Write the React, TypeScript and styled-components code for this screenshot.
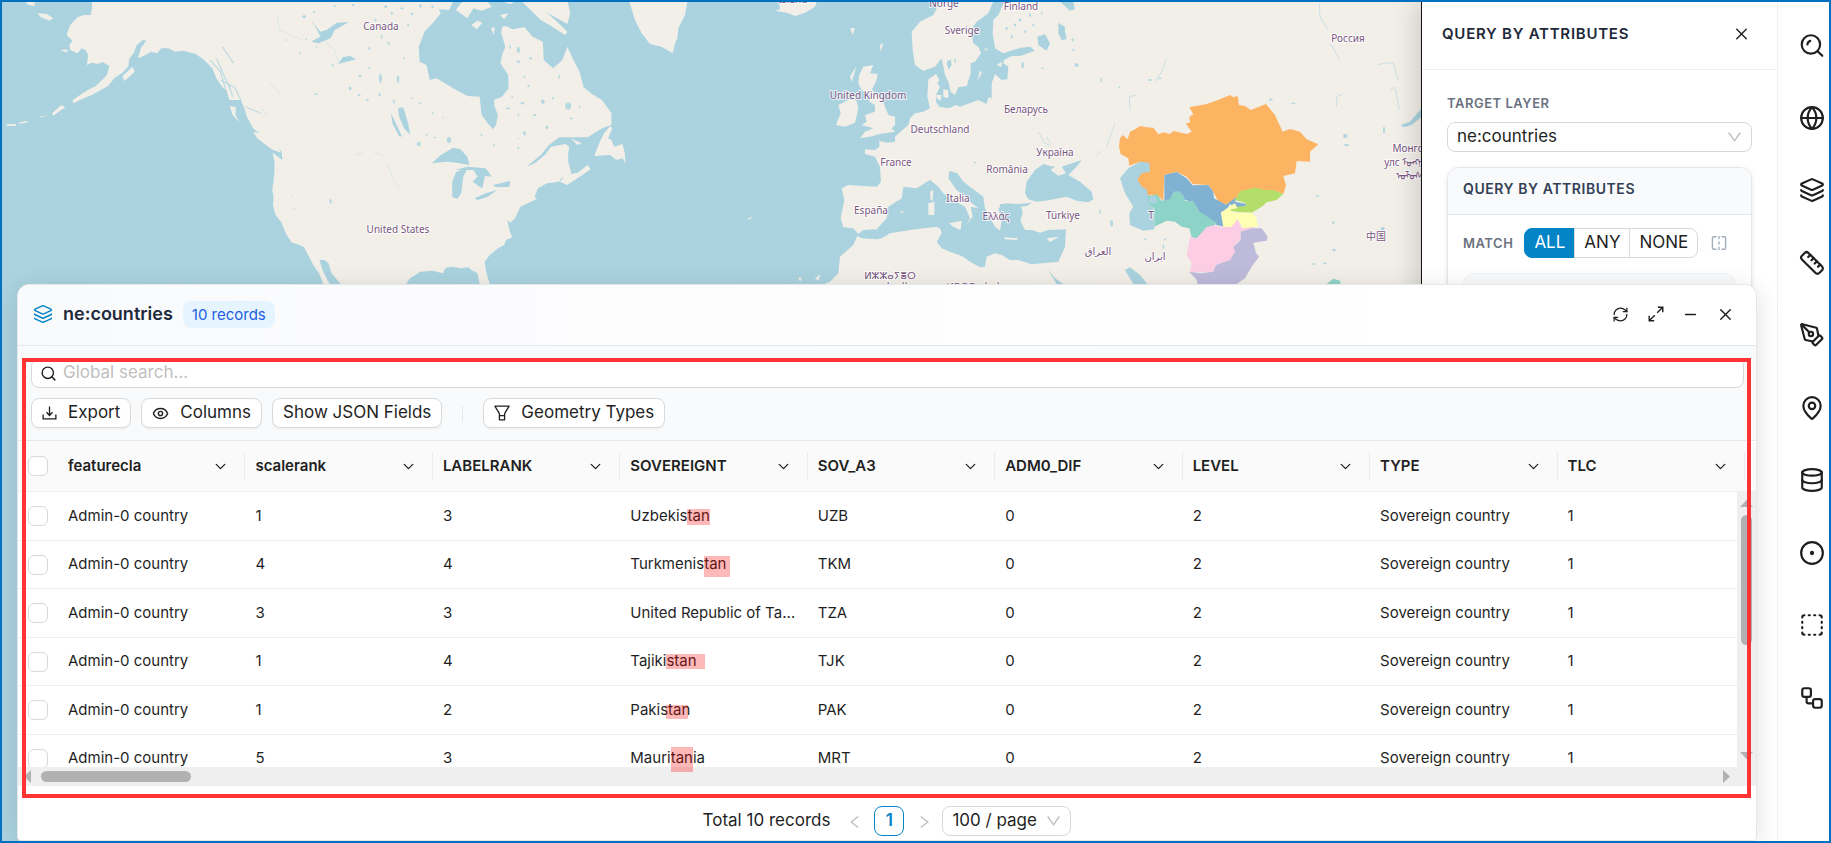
import React from "react";
import styled, { createGlobalStyle, css } from "styled-components";
import {
  Layers, Globe, Ruler, PenTool, MapPin, Database, SquareDashed,
  X, Minus, RefreshCw, Search, ChevronDown, Eye,
} from "lucide-react";

const GlobalStyle = createGlobalStyle`
  *, *::before, *::after { box-sizing: border-box; }
  html, body { margin: 0; padding: 0; }
  body { font-family: Inter, "Liberation Sans", sans-serif; color: #1f1f1f; background: #fff; }
  button, input, select { font: inherit; color: inherit; margin: 0; }
  button { cursor: pointer; }
`;

const color = {
  frame: "#0070c0",
  accent: "#0284c7",
  line: "#e5e7eb",
  control: "#d9d9d9",
  tint: "#f8fafc",
  slate: "#1e293b",
  muted: "#6b7280",
};

/* ---------- page shell ---------- */

const Page = styled.div`
  position: relative;
  display: grid;
  grid-template-columns: minmax(0, 1fr) 356px 52px;
  height: 100vh;
  border: 2px solid ${color.frame};
  overflow: hidden;
`;

const MapPane = styled.main`
  min-width: 0;
  overflow: hidden;
  background: #aad3df;
`;

const MapDrawing = styled.svg`
  display: block;
  width: 100%;
  height: 100%;
`;

const MapLabel = styled.text`
  font-family: "Noto Sans", "DejaVu Sans", "Noto Sans CJK SC", sans-serif;
  font-size: 10px;
  fill: #7a5682;
  stroke: rgba(255, 255, 255, 0.75);
  stroke-width: 2px;
  paint-order: stroke;
  text-anchor: middle;
`;

/* ---------- query panel ---------- */

const Panel = styled.aside`
  z-index: 1;
  background: #fff;
  border-left: 1px solid #111;
  box-shadow: -4px 0 24px rgba(0, 0, 0, 0.16);
`;

const PanelHeader = styled.header`
  display: flex;
  align-items: center;
  justify-content: space-between;
  height: 68px;
  padding: 0 26px 4px 20px;
  border-bottom: 1px solid #f0f0f0;
`;

const PanelTitle = styled.h2`
  margin: 0;
  font-size: 15px;
  line-height: 20px;
  font-weight: 600;
  letter-spacing: 0.05em;
  color: ${color.slate};
`;

const IconButton = styled.button`
  display: flex;
  align-items: center;
  justify-content: center;
  width: 19px;
  height: 19px;
  padding: 0;
  border: 0;
  background: none;
`;

const PanelBody = styled.div`
  display: flex;
  flex-direction: column;
  padding: 24px 25px 0 25px;
`;

const FieldLabel = styled.label`
  font-size: 13px;
  line-height: 18px;
  font-weight: 600;
  letter-spacing: 0.04em;
  color: ${color.muted};
`;

const SelectBox = styled.div<{ $top?: number }>`
  position: relative;
  display: flex;
  align-items: center;
  height: 30px;
  margin-top: ${(p) => p.$top ?? 0}px;
  border: 1px solid ${color.control};
  border-radius: 8px;
  background: #fff;
  svg { position: absolute; right: 10px; pointer-events: none; }
`;

const Select = styled.select`
  appearance: none;
  width: 100%;
  height: 28px;
  padding: 0 9px 2px;
  border: 0;
  border-radius: 8px;
  background: transparent;
  font-size: 17px;
`;

const Card = styled.section`
  margin-top: 15px;
  border: 1px solid ${color.line};
  border-radius: 12px;
  box-shadow: 0 1px 4px rgba(0, 0, 0, 0.1);
  overflow: hidden;
`;

const CardTitle = styled.h3`
  margin: 0;
  padding: 11px 15px 15px;
  border-bottom: 1px solid ${color.line};
  background: ${color.tint};
  font-size: 14px;
  line-height: 20px;
  font-weight: 600;
  letter-spacing: 0.04em;
  color: #334155;
`;

const CardBody = styled.div`
  padding: 13px 15px 0;
`;

const MatchRow = styled.div`
  display: flex;
  align-items: center;
  gap: 11px;
`;

const Segments = styled.div`
  display: flex;
  height: 30px;
`;

const Segment = styled.button<{ $active?: boolean }>`
  padding: 0 9px 2px;
  border: 1px solid ${color.control};
  background: #fff;
  font-size: 17px;
  line-height: 24px;
  & + & { margin-left: -1px; }
  &:first-child { border-radius: 8px 0 0 8px; }
  &:last-child { border-radius: 0 8px 8px 0; }
  ${(p) => p.$active && css`
    background: ${color.accent};
    border-color: ${color.accent};
    color: #fff;
  `}
`;

const RuleGroup = styled.div`
  height: 200px;
  margin-top: 15px;
  border: 1px solid #eef0f3;
  border-radius: 12px;
  background: ${color.tint};
`;

/* ---------- tool rail ---------- */

const RailShell = styled.div`
  z-index: 1;
  border-left: 1px solid #f0f0f0;
  background: #fff;
`;

const Rail = styled.nav`
  display: flex;
  flex-direction: column;
  align-items: flex-end;
  height: 732px;
  padding-top: 7px;
`;

const RailButton = styled.button`
  display: flex;
  flex: 1;
  align-items: center;
  justify-content: center;
  width: 34px;
  padding: 0;
  border: 0;
  background: none;
`;

/* ---------- attribute window ---------- */

const Dialog = styled.section`
  position: absolute;
  z-index: 2;
  left: 15px;
  right: 72px;
  bottom: 0;
  border: 1px solid ${color.line};
  border-radius: 12px 12px 4px 4px;
  background: #fff;
  box-shadow: 0 4px 24px rgba(0, 0, 0, 0.12);
`;

const DialogHeader = styled.header`
  display: flex;
  align-items: center;
  gap: 10px;
  height: 61px;
  padding: 0 21px 2px 15px;
  border-bottom: 1px solid ${color.line};
  border-radius: 12px 12px 0 0;
  background: linear-gradient(90deg, #f9fafc, #fff 80%);
  color: #1f1f1f;
`;

const DialogTitle = styled.h2`
  margin: 0;
  font-size: 18px;
  line-height: 24px;
  font-weight: 600;
  color: ${color.slate};
`;

const Badge = styled.span`
  padding: 0 9px;
  border-radius: 8px;
  background: #e6f4ff;
  font-size: 15px;
  line-height: 27px;
  color: #1d5fe0;
`;

const WindowButtons = styled.div`
  display: flex;
  gap: 16px;
  margin-left: auto;
`;

const Tools = styled.div`
  display: flex;
  flex-direction: column;
  gap: 10px;
  padding: 12px 12px 12px 13px;
  border-bottom: 1px solid ${color.line};
  background: ${color.tint};
`;

const SearchBox = styled.label`
  display: flex;
  align-items: center;
  gap: 6px;
  height: 30px;
  padding: 0 8px;
  border: 1px solid ${color.control};
  border-radius: 8px;
  background: #fff;
`;

const SearchInput = styled.input`
  flex: 1;
  height: 24px;
  padding: 0 0 2px;
  border: 0;
  outline: 0;
  background: none;
  font-size: 17px;
  &::placeholder { color: #bfbfbf; opacity: 1; }
`;

const ToolRow = styled.div`
  display: flex;
  align-items: center;
  gap: 10px;
`;

const ToolButton = styled.button`
  display: flex;
  align-items: center;
  gap: 11px;
  height: 30px;
  padding: 0 10px;
  border: 1px solid ${color.control};
  border-radius: 8px;
  background: #fff;
  box-shadow: 0 2px 1px rgba(0, 0, 0, 0.03);
  font-size: 17px;
  line-height: 24px;
  span { padding-bottom: 2px; }
`;

const Separator = styled.span`
  width: 1px;
  height: 15px;
  margin: 0 10px;
  background: ${color.line};
`;

const Grid = styled.table`
  width: 100%;
  border-collapse: separate;
  border-spacing: 0;
  table-layout: fixed;
  font-size: 15px;
`;

const CheckCol = styled.col`
  width: 40px;
`;

const EdgeCol = styled.col`
  width: 11px;
`;

const HeadCell = styled.th`
  height: 51px;
  padding: 0;
  border-bottom: 1px solid #eee;
  background: #fafafa;
  font-weight: 600;
  text-align: left;
  &:last-child { border-radius: 0 8px 0 0; }
`;

const HeadLabel = styled.div`
  display: flex;
  align-items: center;
  justify-content: space-between;
  height: 28px;
  padding: 0 15px 0 10px;
  border-right: 1px solid #ebebeb;
  span { padding-bottom: 2px; }
`;

const CheckHolder = styled.div`
  padding-left: 10px;
  line-height: 0;
`;

const Row = styled.tr`
  height: 49px;
  &:nth-child(even) { height: 48px; }
`;

const Cell = styled.td`
  padding: 0 10px 2px;
  border-bottom: 1px solid #eee;
  white-space: nowrap;
`;

const CheckCell = styled.td`
  padding: 0;
  border-bottom: 1px solid #eee;
`;

const Ellipsis = styled.div`
  overflow: hidden;
  text-overflow: ellipsis;
`;

const Check = styled.input`
  appearance: none;
  width: 20px;
  height: 20px;
  margin: 0;
  border: 1px solid ${color.control};
  border-radius: 6px;
  background: #fff;
  vertical-align: middle;
`;

/* translucent marker laid over the matching letters */
const Marker = styled.mark<{ $inset: string }>`
  position: relative;
  background: none;
  color: inherit;
  &::after {
    content: "";
    position: absolute;
    z-index: 2;
    inset: ${(p) => p.$inset};
    background: rgba(255, 0, 0, 0.28);
  }
`;

const GridArea = styled.div`
  position: relative;
  height: 326px;
`;

const bar = css`
  position: absolute;
  z-index: 1;
  display: flex;
  align-items: center;
  justify-content: space-between;
  background: #efefef;
`;

const VBar = styled.div`
  ${bar}
  flex-direction: column;
  top: 51px;
  right: 0;
  bottom: 0;
  width: 19px;
  padding: 8px 0;
`;

const HBar = styled.div`
  ${bar}
  left: 0;
  right: 0;
  top: 326px;
  height: 19px;
  padding: 0 26px 0 6px;
`;

const VThumb = styled.div`
  width: 11px;
  height: 130px;
  margin: 8px 0 auto;
  border-radius: 6px;
  background: #b1b1b1;
`;

const HThumb = styled.div`
  width: 150px;
  height: 11px;
  margin: 0 auto 0 10px;
  border-radius: 6px;
  background: #b1b1b1;
`;

const Footer = styled.footer`
  display: flex;
  align-items: center;
  justify-content: center;
  margin-top: 19px;
  padding: 20px 0 4px;
  font-size: 17px;
`;

const Total = styled.span`
  padding-bottom: 3px;
  margin-right: 14px;
  line-height: 24px;
`;

const PageArrow = styled.button`
  display: flex;
  align-items: center;
  justify-content: center;
  width: 20px;
  height: 30px;
  padding: 2px 0 0;
  border: 0;
  background: none;
`;

const PageButton = styled.button`
  width: 30px;
  height: 30px;
  margin: 0 10px;
  padding: 0 0 2px;
  border: 1px solid ${color.accent};
  border-radius: 8px;
  background: #fff;
  color: ${color.accent};
  font-weight: 600;
`;

const PageSize = styled(SelectBox)`
  width: 129px;
  margin-left: 8px;
`;

const FocusFrame = styled.div`
  position: absolute;
  z-index: 3;
  left: 4px;
  right: 5px;
  top: 73px;
  bottom: 42px;
  border: 4px solid #ff3333;
  pointer-events: none;
`;

/* ---------- glyphs ---------- */

const DownGlyph = () => (
  <svg width="13" height="12" viewBox="0 0 13 12" fill="none" stroke="#bfbfbf" strokeWidth="1.4">
    <path d="M.7 1.5 6.5 9.8 12.3 1.5" />
  </svg>
);

const ArrowGlyph = ({ flip }: { flip?: boolean }) => (
  <svg width="9" height="14" viewBox="0 0 9 14" fill="none" stroke="#bfbfbf" strokeWidth="1.4">
    <path d={flip ? "M.8 1.5 7.8 7 .8 12.5" : "M8.2 1.5 1.2 7 8.2 12.5"} />
  </svg>
);

const Triangle = ({ d, w, h }: { d: string; w: number; h: number }) => (
  <svg width={w} height={h} viewBox={`0 0 ${w} ${h}`}><path d={d} fill="#b1b1b1" /></svg>
);

const DownloadGlyph = () => (
  <svg width="15" height="16" viewBox="0 0 16 16" fill="none" stroke="currentColor" strokeWidth="1.4">
    <path d="M1.2 9.5V14.2H14.8V9.5M8 1V10M4.8 7.2 8 10.6 11.2 7.2" />
  </svg>
);

const FilterGlyph = () => (
  <svg width="16" height="16" viewBox="0 0 16 16" fill="none" stroke="currentColor" strokeWidth="1.3" strokeLinejoin="round">
    <path d="M.9 1.2H15.1L10.6 8.6V14.8H5.4V8.6ZM5.4 10.6H10.6" />
  </svg>
);

const ExpandGlyph = () => (
  <svg width="16" height="16" viewBox="0 0 16 16" fill="none" stroke="currentColor" strokeWidth="1.4">
    <path d="M9.8 1.2H14.8V6.2M14.8 1.2 9.2 6.8M6.2 14.8H1.2V9.8M1.2 14.8 6.8 9.2" />
  </svg>
);

const SplitGlyph = () => (
  <svg width="16" height="16" viewBox="0 0 16 16" fill="none" stroke="#a3adbb" strokeWidth="1.4">
    <path d="M5.5 1.7H2.6A1.2 1.2 0 0 0 1.4 2.9V13A1.2 1.2 0 0 0 2.6 14.2H5.5M10.5 1.7H13.4A1.2 1.2 0 0 1 14.6 2.9V13A1.2 1.2 0 0 1 13.4 14.2H10.5M8 1V4M8 6.5V9.5M8 12V15" />
  </svg>
);

const ZoomGlyph = () => (
  <svg width="26" height="26" viewBox="0 0 24 24" fill="none" stroke="currentColor" strokeWidth="2" strokeLinecap="round">
    <circle cx="11" cy="11.5" r="8.5" />
    <path d="M21.5 22 17.2 17.7M7.8 11.5A3.6 3.6 0 0 1 10.4 8.2" />
  </svg>
);

const PointGlyph = () => (
  <svg width="26" height="26" viewBox="0 0 24 24" fill="none" stroke="currentColor" strokeWidth="2">
    <circle cx="12" cy="12" r="10" />
    <circle cx="12" cy="12" r="1" />
  </svg>
);

const LinkedGlyph = () => (
  <svg width="26" height="26" viewBox="0 0 24 24" fill="none" stroke="currentColor" strokeWidth="2">
    <rect x="3" y="3" width="8" height="8" rx="2" />
    <rect x="13" y="13" width="8" height="8" rx="2" />
    <path d="M7 11V15A2 2 0 0 0 9 17H13" />
  </svg>
);

/* ---------- map ---------- */

const WATER = "#aad3df";
const LAND = "#f2efe9";

const westLakes: [number, number, number, number][] = [
  [745, 50, 8, 6], [770, 35, 4, 5], [820, 18, 4, 4], [865, 15, 6, 4], [945, 20, 6, 6], [960, 40, 4, 8], [985, 25, 8, 4],
  [1010, 42, 6, 5], [1030, 18, 5, 7], [1060, 20, 5, 5], [920, 60, 4, 6], [935, 110, 3, 10], [905, 145, 4, 7], [952, 130, 4, 6],
  [960, 90, 4, 5], [1000, 75, 4, 6], [990, 175, 3, 6], [700, 120, 3, 4], [735, 160, 4, 5], [750, 118, 3, 5], [775, 140, 3, 3],
  [815, 195, 4, 6], [882, 228, 6, 5], [932, 235, 6, 20], [975, 238, 5, 16], [905, 205, 3, 6], [858, 265, 6, 8], [880, 285, 6, 4],
  [775, 282, 9, 3], [900, 300, 6, 4], [930, 285, 5, 6], [965, 305, 4, 8], [1010, 295, 6, 3], [1030, 310, 5, 4], [1060, 340, 5, 4],
  [1085, 352, 4, 3], [1100, 420, 9, 13], [1026, 432, 8, 10], [1045, 405, 5, 3], [1065, 412, 6, 3], [1210, 435, 3, 6], [1180, 405, 4, 4],
  [1250, 140, 3, 8], [1270, 150, 6, 14], [1270, 185, 8, 5], [1300, 175, 5, 6], [1285, 230, 4, 5], [1295, 258, 5, 4], [1280, 310, 9, 5],
  [1245, 325, 9, 4], [1330, 305, 8, 9], [1355, 295, 4, 6], [1392, 318, 12, 15], [1340, 382, 5, 8], [1285, 400, 6, 9], [1310, 345, 7, 4],
  [1270, 345, 4, 4], [1420, 320, 4, 5], [1400, 355, 6, 4], [1270, 445, 3, 6], [1255, 290, 4, 4], [1370, 230, 3, 9], [810, 604, 5, 10],
  [722, 625, 2, 5], [715, 590, 2, 3], [1270, 415, 3, 3],
];

const eastLakes: [number, number, number, number][] = [
  [1220, 85, 4, 8], [1245, 75, 5, 6], [1235, 110, 4, 8], [1260, 60, 6, 6], [1290, 45, 5, 8], [1275, 95, 5, 5], [1300, 75, 4, 6],
  [1325, 40, 4, 5], [1390, 85, 8, 12], [1418, 120, 5, 6], [1420, 150, 4, 5], [1430, 195, 9, 7], [1268, 195, 5, 14], [1327, 205, 5, 4],
  [1503, 240, 3, 10], [1558, 262, 4, 4], [1650, 240, 8, 4], [1680, 235, 6, 4], [2010, 300, 3, 6], [2080, 310, 10, 3], [2014, 298, 6, 4],
  [2236, 408, 10, 9], [2240, 435, 12, 4], [2352, 390, 4, 15], [2152, 588, 6, 4], [2200, 668, 6, 5], [2348, 686, 9, 7], [2202, 750, 8, 5],
  [2175, 790, 8, 4], [2140, 792, 10, 3], [1635, 718, 5, 4], [1695, 718, 5, 4], [1690, 740, 3, 10], [1535, 670, 6, 14], [1500, 635, 3, 12],
  [1155, 150, 5, 4], [1125, 488, 7, 3],
];

const labels: [string, number, number][] = [
  ["Canada", 381, 30], ["United States", 398, 233], ["Ísland", 793, 3], ["Norge", 944, 7], ["Sverige", 962, 34],
  ["Finland", 1021, 10], ["United Kingdom", 868, 99], ["Deutschland", 940, 133], ["France", 896, 166], ["España", 871, 214],
  ["Italia", 958, 202], ["Ελλάς", 996, 220], ["România", 1007, 173], ["Україна", 1055, 156], ["Беларусь", 1026, 113],
  ["Türkiye", 1063, 219], ["العراق", 1098, 255], ["ایران", 1155, 260], ["Россия", 1348, 42], ["中国", 1376, 240],
  ["ⵍⵣⵣⴰⵢⴻⵔ", 890, 279], ["الجزائر", 893, 290], ["ⵍⵉⴱⵢⴰ ليبيا", 973, 290], ["Монгол", 1411, 152], ["улс", 1392, 166],
  ["ᠮᠣᠩᠭᠣᠯ", 1418, 166], ["ᠤᠯᠤᠰ", 1409, 179],
];

function WorldMap() {
  return (
    <MapDrawing viewBox="2 2 1419 839" preserveAspectRatio="xMinYMin slice" role="img" aria-label="World map">
      <g transform="scale(.40816 .33333)" fill={LAND}>
        <path d="M224 0 226 25 222 45 205 45 190 52 172 75 163 105 178 122 170 135 172 150 190 160 200 145 210 150 216 165 213 195 225 188 240 192 252 186 268 198 262 225 250 240 235 258 215 270 200 282 178 300 180 310 200 298 225 285 250 268 265 258 280 235 300 218 315 198 316 178 328 158 335 135 350 120 358 122 345 145 338 175 352 168 370 155 385 160 395 145 412 145 430 155 450 152 480 162 500 180 520 205 530 235 545 262 555 270 562 300 590 300 600 330 605 350 620 385 640 405 665 420 680 440 690 455 692 480 668 458 673 490 672 520 670 545 667 570 670 590 669 615 675 645 690 668 700 700 715 728 730 733 745 742 757 770 770 800 782 820 792 852 808 852 800 835 790 810 783 780 795 780 805 790 812 820 835 852 995 852 1005 835 1030 815 1060 812 1085 820 1092 803 1110 800 1130 805 1148 802 1155 810 1170 820 1175 852 1200 852 1192 820 1187 785 1200 765 1220 745 1235 735 1240 720 1255 712 1248 690 1243 660 1250 668 1262 655 1275 620 1315 597 1310 590 1318 565 1340 550 1370 545 1375 535 1400 520 1392 485 1392 460 1395 440 1385 432 1350 440 1335 465 1310 490 1290 500 1325 465 1345 435 1370 412 1440 412 1475 385 1498 375 1498 340 1475 300 1450 282 1430 262 1420 215 1405 180 1390 140 1378 180 1355 205 1332 180 1330 125 1305 110 1285 82 1255 88 1240 78 1230 80 1228 100 1238 140 1230 165 1226 190 1245 225 1246 265 1230 290 1210 300 1212 320 1220 345 1215 375 1208 388 1195 370 1180 345 1175 290 1145 288 1110 265 1070 235 1053 240 1045 195 1028 185 1026 140 1040 95 1060 70 1080 40 1075 28 1100 30 1112 0Z" />
        <path d="M1372 545 1385 525 1415 518 1440 495 1447 508 1420 530 1390 555ZM1495 378 1480 400 1468 430 1456 468 1495 465 1510 480 1525 475 1533 490 1530 455 1525 432 1505 440 1498 420 1490 415 1500 385ZM1398 415 1425 430 1415 435ZM1275 0 1300 30 1325 60 1350 78 1385 105 1390 95 1365 65 1340 38 1365 55 1390 72 1397 40 1390 0ZM1117 30 1130 8 1160 0 1190 0 1205 20 1180 32 1160 25 1145 55ZM1155 75 1170 62 1182 68 1168 88ZM1203 85 1212 82 1210 105ZM1225 45 1245 40 1235 58ZM1220 0 1270 0 1250 12ZM563 318 578 322 577 345 587 367 570 345ZM620 395 650 405 680 435 688 458 665 448 630 415ZM300 228 325 200 330 215 305 243ZM62 5 85 5 85 18 70 15ZM92 40 115 42 130 55 122 62 100 52ZM148 150 165 148 165 158ZM150 315 160 322 130 347 128 340ZM95 350 120 345 100 352ZM15 373 38 371 40 377 18 378ZM45 368 65 363 70 366 50 371Z" />
        <g fill={WATER}>
          <path d="M1058 490 1080 465 1110 443 1128 448 1145 470 1150 495 1120 488 1095 485ZM1108 590 1108 545 1118 515 1145 505 1135 530 1130 580 1120 597ZM1115 510 1145 500 1190 505 1205 530 1188 528 1182 565 1175 560 1158 545 1170 530 1160 510ZM1163 595 1190 580 1218 570 1195 590 1170 600ZM1208 555 1250 543 1248 560 1215 562ZM975 325 988 322 1000 370 1005 405 990 385 978 350ZM958 340 968 365 985 410 978 408 962 372ZM762 60 785 95 800 90 825 68 855 66 820 90 810 115 780 130 762 125 785 110 775 85ZM828 192 840 172 858 168 872 178 850 185Z" />
          {westLakes.map(([x, y, rx, ry]) => <ellipse key={`${x}-${y}`} cx={x} cy={y} rx={rx * 0.6} ry={ry * 0.7} opacity=".85" />)}
        </g>
        <path d="M680 50 685 90 740 120M800 130 820 150 828 185M660 245 690 290M950 490 960 530 978 565M640 320 655 350M915 455 945 470M870 465 888 458" fill="none" stroke={WATER} strokeWidth="2" opacity=".45" />
        <path d="M515 180 540 215 552 265M530 175 548 225 565 270M540 240 575 262 590 300M545 140 572 190M600 320 640 340M560 250 570 290" fill="none" stroke={WATER} strokeWidth="3" opacity=".75" />
      </g>

      <g transform="translate(600 0) scale(.33333)" fill={LAND}>
        <path d="M1215 0 1195 45 1180 60 1178 100 1185 145 1210 160 1262 143 1290 140 1305 152 1260 168 1235 168 1212 180 1210 190 1225 200 1222 238 1205 240 1185 222 1175 250 1175 295 1165 292 1160 312 1135 300 1080 320 1070 315 1045 325 1018 320 1008 305 1010 280 1020 262 1012 250 1018 240 1008 222 985 238 982 290 990 325 970 335 945 340 930 355 925 375 885 410 885 425 860 428 838 422 838 440 825 450 795 448 795 462 825 470 840 500 843 545 830 560 745 555 725 565 733 600 722 655 730 682 760 685 775 702 790 690 830 688 860 655 865 620 905 595 910 560 950 565 990 540 1015 560 1030 580 1060 600 1095 620 1110 655 1100 672 1118 650 1112 620 1135 625 1110 605 1095 590 1070 570 1045 535 1048 512 1072 520 1090 545 1150 590 1155 625 1185 680 1200 692 1205 660 1195 625 1215 610 1260 612 1265 640 1260 660 1275 690 1295 690 1320 698 1345 690 1398 688 1395 740 1375 785 1295 793 1255 780 1230 780 1205 765 1185 760 1160 770 1155 800 1140 802 1110 785 1090 770 1050 755 1025 745 1010 725 1025 700 1022 688 1010 680 930 690 870 700 845 715 830 718 785 715 772 708 760 735 720 770 715 820 690 845 665 855 665 2530 2470 2530 2470 0Z" />
        <path d="M88 5 105 60 125 100 150 132 185 140 218 160 225 130 232 115 235 85 255 45 262 5ZM538 5 540 28 525 32 560 38 585 48 615 38 645 20 650 5ZM745 300 715 315 722 340 708 375 735 380 765 368 772 340 775 320 768 300ZM790 200 820 195 810 220 833 222 830 240 815 270 845 295 865 345 885 350 885 375 875 385 885 395 840 402 810 410 780 415 795 395 820 385 785 375 800 365 795 345 825 335 825 315 808 305 810 285 785 270 775 250 778 225ZM750 230 768 200 765 215 755 245ZM750 85 765 85 758 105ZM840 135 850 130 842 155ZM1180 5 1165 40 1130 65 1112 90 1120 130 1135 140 1143 160 1125 185 1112 190 1112 220 1100 258 1075 262 1065 285 1052 275 1045 245 1035 225 1025 175 1005 200 970 212 945 195 938 150 935 95 960 65 1000 45 1020 5ZM1140 210 1145 220 1132 242ZM1190 195 1205 185 1205 200ZM1030 268 1045 270 1045 295 1030 290ZM1010 285 1025 285 1022 302 1010 295ZM1152 145 1165 148 1155 155ZM990 575 1000 570 998 602 992 600ZM985 610 1003 605 1003 645 985 645ZM1047 670 1085 662 1082 690 1060 680ZM900 635 912 632 905 640ZM1212 712 1255 715 1250 720 1215 718ZM1340 715 1378 710 1350 726ZM645 835 662 822 655 842ZM595 832 605 835 600 845ZM440 655 458 652 450 658ZM1225 640 1235 638 1232 650ZM1218 665 1228 662 1225 672Z" />
        <g fill={WATER}>
          <path d="M1275 580 1280 545 1305 510 1330 492 1350 498 1365 500 1352 510 1375 527 1398 520 1385 500 1445 480 1430 500 1405 525 1440 545 1475 575 1480 598 1465 607 1430 602 1400 590 1350 600 1310 605 1285 598ZM1240 614 1295 608 1280 618 1258 620ZM1560 535 1585 505 1620 485 1670 480 1680 520 1650 580 1660 615 1663 688 1630 692 1590 675 1588 640 1600 620 1575 580ZM1575 810 1590 802 1620 825 1642 852 1600 852ZM1343 808 1365 835 1390 852 1370 852ZM1200 612 1262 612 1268 640 1260 665 1275 692 1240 700 1215 690 1205 660ZM1312 110 1335 103 1350 130 1340 152 1315 135ZM1380 5 1420 5 1425 28 1410 32ZM1375 68 1392 80 1400 118 1385 120 1375 100ZM2402 375 2430 365 2465 325 2465 350 2435 375 2412 382ZM1040 185 1052 178 1055 195 1045 210ZM1062 180 1068 175 1066 192Z" />
          {eastLakes.map(([x, y, rx, ry]) => <ellipse key={`${x}-${y}`} cx={x} cy={y} rx={rx * 0.7} ry={ry * 0.7} opacity=".9" />)}
        </g>
        <path d="M2332 195 2350 190 2380 188 2388 220 2395 240M2370 270 2385 262 2398 330M2210 320 2210 290 2230 282M1590 330 1588 290 1610 285M1340 410 1350 430M1520 440 1545 370M1665 245 1685 215 1700 175M1315 395 1335 430 1355 438M1490 468 1505 452M2158 10 2160 50 2185 90M2190 130 2220 180" fill="none" stroke={WATER} strokeWidth="3" opacity=".55" />
      </g>

      {labels.map(([name, x, y]) => <MapLabel key={name} x={x} y={y}>{name}</MapLabel>)}
      <MapLabel x="1151" y="219">T</MapLabel>

      <g transform="translate(1000 0) scale(.33333)">
        <path fill="#fdb462" d="M360 415 368 405 383 418 390 395 410 385 420 378 440 382 460 383 475 403 490 397 510 402 520 393 560 402 575 395 557 370 570 368 568 350 580 343 568 322 620 312 660 298 690 285 700 292 713 288 717 315 735 318 752 330 798 312 825 345 848 395 870 387 900 395 920 418 955 433 930 455 930 485 890 483 885 520 850 528 858 555 850 582 820 570 795 572 765 566 720 575 705 600 678 614 655 605 640 575 625 555 578 552 560 530 530 516 493 525 490 602 470 585 443 585 440 568 425 560 412 538 425 520 450 515 448 488 420 485 388 497 385 475 362 462 357 440Z" />
        <path fill="#80b1d3" d="M493 525 530 516 560 535 578 556 625 555 640 575 642 595 678 614 700 598 715 588 705 605 740 612 735 620 700 622 690 612 680 630 663 636 672 680 650 675 600 640 580 605 555 600 530 575 510 602 493 602Z" />
        <path fill="#8dd3c7" d="M443 590 470 583 485 602 510 597 520 575 535 573 550 585 555 603 580 603 595 632 650 668 640 680 620 682 600 705 590 715 575 712 568 685 545 680 525 665 500 662 463 680 463 625 447 612Z" />
        <path fill={WATER} d="M448 592 465 588 473 603 465 612 448 608Z" />
        <path fill="#b3de69" d="M705 600 720 573 765 563 795 570 820 570 850 582 830 600 800 607 785 620 755 638 715 636 690 632 695 622 740 618 735 608Z" />
        <path fill="#ffffb3" d="M663 638 690 618 705 610 712 625 690 628 700 638 755 638 770 655 773 680 730 686 715 660 695 680 670 682Z" />
        <path fill="#fccde5" d="M570 712 590 715 620 682 640 676 665 682 695 680 713 658 725 685 770 680 740 690 722 695 722 715 700 740 705 755 690 780 648 795 640 815 570 815 575 790 560 765 565 740Z" />
        <path fill="#bebada" d="M568 815 600 820 640 815 648 795 690 780 705 755 700 740 722 720 722 695 755 685 785 685 803 710 800 722 760 728 768 760 777 770 755 800 735 835 710 852 593 852 590 840Z" />
        <path fill="#8dd3c7" d="M980 852 1000 836 1020 842 1022 856Z" />
      </g>
    </MapDrawing>
  );
}

/* ---------- data ---------- */

const columns = ["featurecla", "scalerank", "LABELRANK", "SOVEREIGNT", "SOV_A3", "ADM0_DIF", "LEVEL", "TYPE", "TLC"];

type Name = { before: string; hit?: string; after?: string; inset?: string };

const rows: { scale: number; label: number; name: Name; code: string }[] = [
  { scale: 1, label: 3, name: { before: "Uzbekis", hit: "tan", inset: "3px 0 0 0" }, code: "UZB" },
  { scale: 4, label: 4, name: { before: "Turkmenis", hit: "tan", inset: "2px -4px -4px 0" }, code: "TKM" },
  { scale: 3, label: 3, name: { before: "United Republic of Tanzania" }, code: "TZA" },
  { scale: 1, label: 4, name: { before: "Tajiki", hit: "stan", inset: "3px -8px 1px 0" }, code: "TJK" },
  { scale: 1, label: 2, name: { before: "Pakis", hit: "tan", inset: "5px 2px 0 -2px" }, code: "PAK" },
  { scale: 5, label: 3, name: { before: "Mauri", hit: "tan", after: "ia", inset: "-1px 0 -5px 0" }, code: "MRT" },
];

const rail = [
  { name: "Zoom", icon: <ZoomGlyph /> },
  { name: "Base map", icon: <Globe size={26} /> },
  { name: "Layers", icon: <Layers size={26} /> },
  { name: "Measure", icon: <Ruler size={26} /> },
  { name: "Draw", icon: <PenTool size={26} /> },
  { name: "Locate", icon: <MapPin size={26} /> },
  { name: "Data", icon: <Database size={26} /> },
  { name: "Point", icon: <PointGlyph /> },
  { name: "Select area", icon: <SquareDashed size={26} /> },
  { name: "Workflow", icon: <LinkedGlyph /> },
];

function NameText({ name }: { name: Name }) {
  if (!name.hit) return <Ellipsis>{name.before}</Ellipsis>;
  return <>{name.before}<Marker $inset={name.inset ?? "0"}>{name.hit}</Marker>{name.after}</>;
}

function QueryPanel() {
  return (
    <Panel>
      <PanelHeader>
        <PanelTitle>QUERY BY ATTRIBUTES</PanelTitle>
        <IconButton aria-label="Close panel"><X size={20} strokeWidth={1.7} /></IconButton>
      </PanelHeader>
      <PanelBody>
        <FieldLabel htmlFor="target-layer">TARGET LAYER</FieldLabel>
        <SelectBox $top={10}>
          <Select id="target-layer"><option>ne:countries</option></Select>
          <DownGlyph />
        </SelectBox>
        <Card>
          <CardTitle>QUERY BY ATTRIBUTES</CardTitle>
          <CardBody>
            <MatchRow>
              <FieldLabel as="span">MATCH</FieldLabel>
              <Segments>
                <Segment $active>ALL</Segment>
                <Segment>ANY</Segment>
                <Segment>NONE</Segment>
              </Segments>
              <IconButton aria-label="Add group"><SplitGlyph /></IconButton>
            </MatchRow>
            <RuleGroup />
          </CardBody>
        </Card>
      </PanelBody>
    </Panel>
  );
}

function AttributeTable() {
  return (
    <GridArea>
      <Grid>
        <colgroup>
          <CheckCol />
          {columns.map((c) => <col key={c} />)}
          <EdgeCol />
        </colgroup>
        <thead>
          <tr>
            <HeadCell as="td"><CheckHolder><Check type="checkbox" aria-label="Select all" /></CheckHolder></HeadCell>
            {columns.map((c) => (
              <HeadCell key={c}>
                <HeadLabel><span>{c}</span><ChevronDown size={17} strokeWidth={1.8} /></HeadLabel>
              </HeadCell>
            ))}
            <HeadCell as="td" />
          </tr>
        </thead>
        <tbody>
          {rows.map((r) => (
            <Row key={r.code}>
              <CheckCell><CheckHolder><Check type="checkbox" aria-label={`Select ${r.code}`} /></CheckHolder></CheckCell>
              <Cell>Admin-0 country</Cell>
              <Cell>{r.scale}</Cell>
              <Cell>{r.label}</Cell>
              <Cell><NameText name={r.name} /></Cell>
              <Cell>{r.code}</Cell>
              <Cell>0</Cell>
              <Cell>2</Cell>
              <Cell>Sovereign country</Cell>
              <Cell>1</Cell>
              <CheckCell />
            </Row>
          ))}
        </tbody>
      </Grid>
      <VBar>
        <Triangle w={13} h={7} d="M0 7 6.5 0 13 7Z" />
        <VThumb />
        <Triangle w={13} h={7} d="M0 0 6.5 7 13 0Z" />
      </VBar>
      <HBar>
        <Triangle w={7} h={13} d="M7 0 0 6.5 7 13Z" />
        <HThumb />
        <Triangle w={7} h={13} d="M0 0 7 6.5 0 13Z" />
      </HBar>
    </GridArea>
  );
}

export default function App() {
  return (
    <>
      <GlobalStyle />
      <Page>
        <MapPane><WorldMap /></MapPane>
        <QueryPanel />
        <RailShell>
          <Rail>
            {rail.map((t) => <RailButton key={t.name} aria-label={t.name}>{t.icon}</RailButton>)}
          </Rail>
        </RailShell>
        <Dialog>
          <DialogHeader>
            <Layers size={20} strokeWidth={1.8} color={color.accent} />
            <DialogTitle>ne:countries</DialogTitle>
            <Badge>10 records</Badge>
            <WindowButtons>
              <IconButton aria-label="Refresh"><RefreshCw size={17} strokeWidth={1.8} /></IconButton>
              <IconButton aria-label="Expand"><ExpandGlyph /></IconButton>
              <IconButton aria-label="Minimize"><Minus size={17} strokeWidth={1.8} /></IconButton>
              <IconButton aria-label="Close"><X size={19} strokeWidth={1.7} /></IconButton>
            </WindowButtons>
          </DialogHeader>
          <Tools>
            <SearchBox>
              <Search size={17} strokeWidth={2} />
              <SearchInput type="search" placeholder="Global search..." />
            </SearchBox>
            <ToolRow>
              <ToolButton><DownloadGlyph /><span>Export</span></ToolButton>
              <ToolButton><Eye size={17} strokeWidth={2} /><span>Columns</span></ToolButton>
              <ToolButton><span>Show JSON Fields</span></ToolButton>
              <Separator />
              <ToolButton><FilterGlyph /><span>Geometry Types</span></ToolButton>
            </ToolRow>
          </Tools>
          <AttributeTable />
          <Footer>
            <Total>Total 10 records</Total>
            <PageArrow aria-label="Previous page"><ArrowGlyph /></PageArrow>
            <PageButton aria-current="page">1</PageButton>
            <PageArrow aria-label="Next page"><ArrowGlyph flip /></PageArrow>
            <PageSize>
              <Select aria-label="Rows per page"><option>100 / page</option></Select>
              <DownGlyph />
            </PageSize>
          </Footer>
          <FocusFrame />
        </Dialog>
      </Page>
    </>
  );
}
